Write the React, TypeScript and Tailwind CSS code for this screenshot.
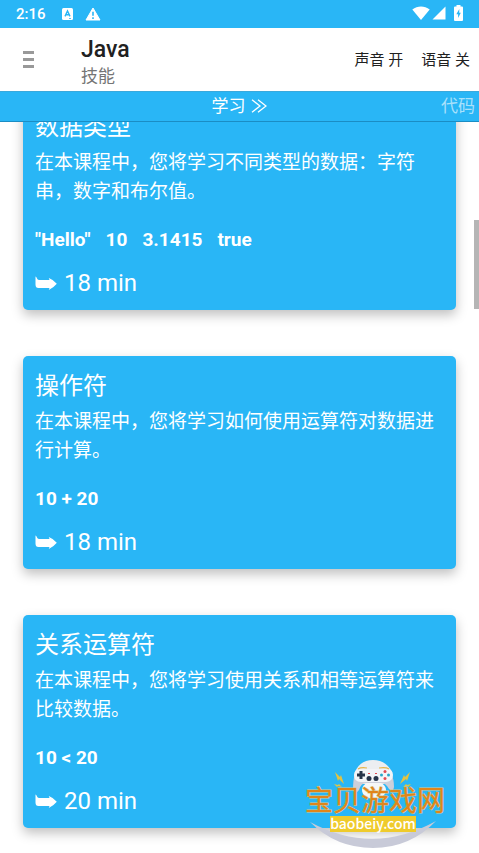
import React from "react";

const BODY = "font-['Roboto','Noto_Sans_CJK_SC',sans-serif]";

type Lesson = { title: string; text: string; examples: string[]; minutes: number };

const lessons: Lesson[] = [
  {
    title: "数据类型",
    text: "在本课程中，您将学习不同类型的数据：字符串，数字和布尔值。",
    examples: ['"Hello"', "10", "3.1415", "true"],
    minutes: 18,
  },
  {
    title: "操作符",
    text: "在本课程中，您将学习如何使用运算符对数据进行计算。",
    examples: ["10 + 20"],
    minutes: 18,
  },
  {
    title: "关系运算符",
    text: "在本课程中，您将学习使用关系和相等运算符来比较数据。",
    examples: ["10 < 20"],
    minutes: 20,
  },
];

function StatusBar() {
  return (
    <div className="flex h-7 items-center justify-between bg-[#29b6f6] px-4 text-white">
      <div className="flex items-center">
        <span className="w-[46px] text-[15px] leading-5 font-medium">2:16</span>
        <svg className="h-3 w-[11px]" viewBox="0 0 11 12" aria-hidden="true">
          <rect width="11" height="12" rx="1.5" fill="#fff" />
          <path d="M3 8.4 5.5 3 8 8.4M3.9 6.8h3.2" fill="none" stroke="#29b6f6" strokeWidth="1.4" />
          <path d="M7 10.5h2" stroke="#29b6f6" strokeWidth=".8" />
        </svg>
        <svg className="ml-3 h-[14px] w-4" viewBox="0 0 16 14" aria-hidden="true">
          <path d="M8 1 15 13H1Z" fill="#fff" stroke="#fff" strokeLinejoin="round" />
          <path d="M8 4.8v4M8 10.2v1.7" stroke="#29b6f6" strokeWidth="1.6" />
        </svg>
      </div>
      <div className="flex items-center pb-[2px]">
        <svg className="h-[14px] w-[18px]" viewBox="0 0 18 14" aria-hidden="true">
          <path d="M.3 3.5C5.5-.4 12.500-.4 17.700 3.500L9 14Z" fill="#fff" />
        </svg>
        <svg className="ml-[2px] h-[14px] w-[14px]" viewBox="0 0 14 14" aria-hidden="true">
          <path d="M13.500 .5V13.500H.5Z" fill="#fff" />
        </svg>
        <svg className="ml-2 h-4 w-[9px]" viewBox="0 0 9 16" aria-hidden="true">
          <path d="M2.500 0h4v1.500H8q1 0 1 1V15q0 1-1 1H1q-1 0-1-1V2.500q0-1 1-1h1.500Z" fill="#fff" />
          <path d="M5.300 4 2.300 9.200h1.800V13L6.800 7.800H5.200Z" fill="#29b6f6" />
        </svg>
      </div>
    </div>
  );
}

function Header() {
  return (
    <header className="flex h-[63px] items-center bg-white pr-[9px] pl-[23px]">
      <button type="button" aria-label="菜单" className="flex w-[58px] flex-col gap-1">
        <span className="h-[3px] w-[11px] bg-[#999]" />
        <span className="h-[3px] w-[11px] bg-[#999]" />
        <span className="h-[3px] w-[11px] bg-[#999]" />
      </button>
      <div className="flex flex-1 flex-col pt-[5px]">
        <h1 className="text-[23px] leading-7 font-medium text-[#212121]">Java</h1>
        <p className="text-[17px] leading-6 text-[#757575]">技能</p>
      </div>
      <div className="flex gap-[18px] text-[15px] leading-5 text-[#212121]">
        <button type="button">声音 开</button>
        <button type="button">语音 关</button>
      </div>
    </header>
  );
}

function Tabs() {
  return (
    <nav className="grid h-[31px] grid-cols-3 items-center border-t border-b border-[#1b8dc4] border-t-[#3aa9dc] bg-[#29b6f6] pr-1 pb-[2px] text-[17px] leading-6 text-white">
      <span />
      <button type="button" className="flex items-center justify-center gap-1.5 pl-1">
        学习
        <svg className="h-[14px] w-4" viewBox="0 0 16 14" fill="none" stroke="#fff" strokeWidth="1.3" aria-hidden="true">
          <path d="M1 .8 9 7 1 13.200M7 .8 15 7 7 13.200" />
        </svg>
      </button>
      <button type="button" className="justify-self-end text-white/60">代码</button>
    </nav>
  );
}

function LessonCard({ lesson }: { lesson: Lesson }) {
  return (
    <article className="rounded-[5px] bg-[#29b6f6] px-3 pt-3 pb-[13px] text-white shadow-[0_5px_12px_rgba(0,0,0,0.25)]">
      <h2 className="text-[24px] leading-9">{lesson.title}</h2>
      <p className="mt-[3px] text-[19px] leading-[29px]">{lesson.text}</p>
      <div className="mt-[22px] flex gap-[15px] text-[19px] leading-6 font-bold">
        {lesson.examples.map((e) => (
          <span key={e}>{e}</span>
        ))}
      </div>
      <div className="mt-[17px] flex items-center gap-[7px] text-[24px] leading-7">
        <svg className="h-[14px] w-[22px]" viewBox="0 0 22 14" fill="#fff" aria-hidden="true">
          <path d="M.5.5C2 1 2 4 4 4H14.500L13.800 2Q19 4 21.800 7.800 18.500 11.800 13.800 14L14.500 12H3.500Q.5 12 .5 8.500Z" />
        </svg>
        <span>{lesson.minutes} min</span>
      </div>
    </article>
  );
}

function Watermark() {
  return (
    <div className="absolute right-[34px] bottom-0 flex h-[93px] w-[140px] flex-col items-center">
      <svg className="absolute inset-0 h-full w-full" viewBox="0 0 140 93" aria-hidden="true">
        <path d="M5 62Q68 96 131 61 105 88 68 88 31 88 5 62Z" fill="#c8cad8" />
        <path d="M50 12Q55 0 68 0T87 12L80 24H56Z" fill="#eceef1" />
        <ellipse cx="69" cy="30" rx="12" ry="9" fill="#f6f7f6" />
        <path d="M50 13Q48 20 48 30 50 35 54 30 56 23 61 23H76Q81 23 84 29 88 33 89 27 89 19 86 13Z" fill="#cdcfda" />
        <path d="M49 15Q49 9 56 9H81Q88 9 88 15T81 22H56Q49 22 49 15Z" fill="#f3f4f7" />
        <path d="M53 9Q56 7 62 8M74 8Q81 7 84 9" fill="none" stroke="#e6b64c" strokeWidth="1.2" />
        <path d="M56 11v8M52 15h8" stroke="#273449" strokeWidth="3" />
        <g fill="#273449"><circle cx="64" cy="18.500" r="2.500" /><circle cx="71" cy="18.500" r="2.500" /></g>
        <g fill="#e34a50"><circle cx="80" cy="11.500" r="1.500" /><circle cx="80" cy="18.500" r="1.500" /><path d="M63 13h2v1h-2zM70 13h2v1h-2z" /></g>
        <g fill="#2aa8c8"><circle cx="76.500" cy="15" r="1.500" /><circle cx="83.500" cy="15" r="1.500" /></g>
        <path d="m30 12 5 5 1-2 3 9-5-5-1 2ZM105 12l-5 5-1-2-4 9 6-5 1 2ZM29 24l4 1 1-1 3 3-4-1-1 1ZM106 24l-4 1-1-1-3 3 4-1 1 1Z" fill="#e3c340" />
      </svg>
      <span className="relative mt-7 text-[28px] leading-7 whitespace-nowrap text-[#e0851a] [-webkit-text-stroke:1px_#d5c890] [paint-order:stroke_fill]">
        宝贝游戏网
      </span>
      <span className="relative mr-1 h-4 w-[86px] bg-[#efcb2c] text-center font-['Noto_Sans_CJK_SC',sans-serif] text-[14px] leading-[14px] font-medium text-white">
        baobeiy.com
      </span>
    </div>
  );
}

export default function App() {
  return (
    <div className={`relative flex h-screen flex-col overflow-hidden bg-white ${BODY}`} lang="zh-CN">
      <StatusBar />
      <Header />
      <Tabs />
      <main className="relative min-h-0 flex-1 overflow-hidden px-[23px]">
        <div className="-mt-[25px] flex flex-col gap-[46px]">
          {lessons.map((l) => (
            <LessonCard key={l.title} lesson={l} />
          ))}
        </div>
        <div className="absolute top-[98px] right-0 h-[89px] w-[5px] bg-[#b5b5b5]" />
      </main>
      <Watermark />
    </div>
  );
}
